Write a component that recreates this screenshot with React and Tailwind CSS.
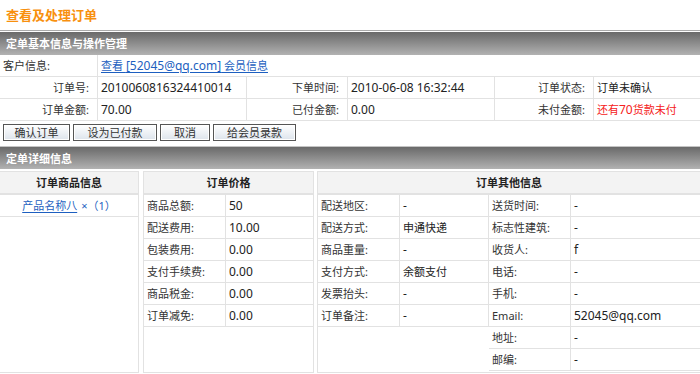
import React from "react";

const FONT = "font-['Noto_Sans','Noto_Sans_CJK_SC',sans-serif]";
const BC = "border-[#e2e2e2]";

function Bar({ children }) {
  return (
    <div className="h-[23px] bg-linear-to-b from-[#6a6a6a] to-[#b2b2b2] flex items-center pl-[6px] text-white font-bold text-[11px] leading-none">
      {children}
    </div>
  );
}

function L({ children, right }) {
  return (
    <div
      className={`h-[22px] border-b border-r ${BC} flex items-center text-[11px] leading-none text-[#333] ${
        right ? "justify-end pr-[8px]" : "pl-[3px]"
      }`}
    >
      {children}
    </div>
  );
}

function V({ children, className = "border-r" }) {
  return (
    <div className={`h-[22px] border-b ${BC} flex items-center pl-[3px] text-[12px] leading-none text-[#222] ${className}`}>
      {children}
    </div>
  );
}

function Btn({ w, children }) {
  return (
    <button
      className={`${w} h-[17px] border border-[#555] bg-linear-to-b from-[#ffffff] to-[#dde4ec] shadow-[inset_0_0_0_1px_#ffffff] text-[11px] leading-none text-[#333] flex items-center justify-center`}
    >
      {children}
    </button>
  );
}

function PanelHead({ children }) {
  return (
    <div className={`h-[23px] bg-[#f3f3f3] border-b-2 ${BC} flex items-center justify-center font-bold text-[11px] leading-none text-[#222]`}>
      {children}
    </div>
  );
}

function DRow({ label, value, lw = "w-[82px]" }) {
  return (
    <div className={`flex h-[22px] border-b ${BC}`}>
      <div className={`${lw} shrink-0 border-r ${BC} flex items-center pl-[3px] text-[11px] leading-none text-[#333]`}>{label}</div>
      <div className="flex-1 flex items-center pl-[3px] text-[12px] leading-none text-[#222]">{value}</div>
    </div>
  );
}

export default function App() {
  const price = [
    ["商品总额:", "50"],
    ["配送费用:", "10.00"],
    ["包装费用:", "0.00"],
    ["支付手续费:", "0.00"],
    ["商品税金:", "0.00"],
    ["订单减免:", "0.00"],
  ];
  const otherL = [
    ["配送地区:", "-"],
    ["配送方式:", <span className="text-[11px]">申通快递</span>],
    ["商品重量:", "-"],
    ["支付方式:", <span className="text-[11px]">余额支付</span>],
    ["发票抬头:", "-"],
    ["订单备注:", "-"],
  ];
  const otherR = [
    ["送货时间:", "-"],
    ["标志性建筑:", "-"],
    ["收货人:", "f"],
    ["电话:", "-"],
    ["手机:", "-"],
    ["Email:", "52045@qq.com"],
    ["地址:", "-"],
    ["邮编:", "-"],
  ];

  return (
    <div className={`${FONT} w-[700px] h-[374px] overflow-hidden bg-white text-[#222]`}>
      <div className="h-[30px] flex items-center pl-[6px] text-[13px] font-bold text-[#f8900e] leading-none">
        查看及处理订单
      </div>
      <div className="h-px bg-[#ababab]" />
      <div className="h-px bg-white" />
      <Bar>定单基本信息与操作管理</Bar>

      <div className="grid grid-cols-[98px_149px_101px_147px_99px_106px]">
        <L>客户信息:</L>
        <div className={`col-span-5 h-[22px] border-b ${BC} flex items-center pl-[3px] leading-none`}>
          <a className="text-[#1d5fc0] underline underline-offset-2 text-[11px]" href="#">
            查看 <span className="text-[12px]">[52045@qq.com]</span> 会员信息
          </a>
        </div>

        <L right>订单号:</L>
        <V>2010060816324410014</V>
        <L right>下单时间:</L>
        <V>2010-06-08 16:32:44</V>
        <L right>订单状态:</L>
        <V className="">
          <span className="text-[11px]">订单未确认</span>
        </V>

        <L right>订单金额:</L>
        <V>70.00</V>
        <L right>已付金额:</L>
        <V>0.00</V>
        <L right>未付金额:</L>
        <V className="">
          <span className="text-[11px] text-[#f52020]">
            还有<span className="text-[12px]">70</span>货款未付
          </span>
        </V>
      </div>

      <div className="h-[25px] flex items-start pt-[3px] pl-[3px] gap-[3px]">
        <Btn w="w-[67px]">确认订单</Btn>
        <Btn w="w-[84px]">设为已付款</Btn>
        <Btn w="w-[50px]">取消</Btn>
        <Btn w="w-[83px]">给会员录款</Btn>
      </div>

      <div className="h-px bg-[#c4c4c4]" />
      <div className="h-[22px] bg-linear-to-b from-[#6a6a6a] to-[#b2b2b2] flex items-center pl-[6px] text-white font-bold text-[11px] leading-none">
        定单详细信息
      </div>
      <div className="h-[2px] bg-white" />

      <div className="flex">
        <div className={`w-[139px] h-[202px] border-t border-r border-b ${BC} shrink-0`}>
          <PanelHead>订单商品信息</PanelHead>
          <div className={`h-[22px] border-b ${BC} flex items-center justify-center leading-none text-[#1d5fc0]`}>
            <a href="#" className="underline underline-offset-2 text-[11px]">产品名称八</a>
            <span className="text-[11px] ml-[4px]">×（1）</span>
          </div>
        </div>

        <div className={`ml-[4px] w-[171px] h-[202px] border-t border-l border-r border-b ${BC} shrink-0`}>
          <PanelHead>订单价格</PanelHead>
          {price.map(([l, v]) => (
            <DRow key={l} label={l} value={v} />
          ))}
        </div>

        <div className={`ml-[3px] w-[383px] h-[202px] border-t border-l border-b ${BC} shrink-0`}>
          <PanelHead>订单其他信息</PanelHead>
          <div className="flex">
            <div className={`w-[171px] border-r ${BC} self-start`}>
              {otherL.map(([l, v]) => (
                <DRow key={l} label={l} value={v} />
              ))}
            </div>
            <div className="flex-1">
              {otherR.map(([l, v]) => (
                <DRow key={l} label={l} value={v} />
              ))}
            </div>
          </div>
        </div>
      </div>
    </div>
  );
}
